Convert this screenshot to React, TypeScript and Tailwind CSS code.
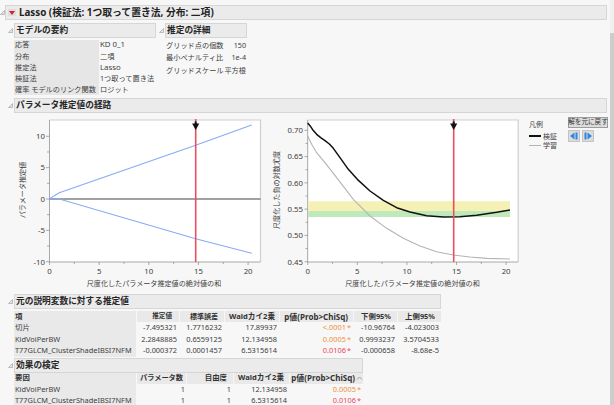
const FONT = '"Noto Sans","Noto Sans CJK JP",sans-serif';

function Tri() {
  return (
    <svg width="5" height="5" viewBox="0 0 5 5" className="shrink-0">
      <path d="M4.5 0.5V4.5H0.5Z" fill="#e4e4e4" stroke="#9a9a9a" strokeWidth="0.6" />
    </svg>
  );
}

function Header({ children, w }: { children: React.ReactNode; w: string }) {
  return (
    <div className="flex items-center ml-[8px]">
      <Tri />
      <div className={`${w} shrink-0 ml-[1px] h-[15px] bg-[#ebebeb] border border-[#d6d6d6] flex items-center pl-[1px] text-[8.7px] font-bold text-[#262626] whitespace-nowrap leading-none`}>
        {children}
      </div>
    </div>
  );
}

const toLeft = (pts: number[][]) => pts.map(([x, y]) => `${x / 3},${110 + y / 3}`).join(" ");
const toRight = (pts: number[][]) => pts.map(([x, y]) => `${270 + x / 3},${110 + y / 3}`).join(" ");

const black = [[113,36],[120,44],[128,56],[140,70],[152,80],[165,89],[178,99],[190,112],[210,140],[235,175],[262,205],[300,240],[340,268],[380,290],[420,303],[470,314],[520,318],[570,317],[620,313],[680,304],[720,297]];
const gray = [[113,75],[125,100],[140,125],[165,155],[200,200],[250,265],[300,315],[350,352],[400,382],[450,405],[500,422],[550,432],[600,438],[650,442],[720,444]];

const txt = "#404040";
const fs = 7.8;

function Marker({ x }: { x: number }) {
  return (
    <g>
      <line x1={x} x2={x} y1={118} y2={261} stroke="#e9505c" strokeWidth={1.6} />
      <path d={`M${x - 3.6} 122.5H${x + 3.6}L${x} 129Z`} fill="#111" />
      <rect x={x - 1} y={120.5} width={2} height={3} fill="#111" />
    </g>
  );
}

function LeftChart() {
  const X = (v: number) => 49.5 + v * 9.93;
  const Y = (v: number) => 198 - v * 6.27;
  return (
    <svg width="256" height="178" viewBox="14 112 256 178" className="shrink-0">
      <rect x={49.5} y={119} width={211} height={142} fill="#fff" />
      <path d="M49.5 119H260.5V261" fill="none" stroke="#d0d0d0" strokeWidth={1.2} />
      <path d="M49.5 119V261H260.5" fill="none" stroke="#a8a8a8" strokeWidth={1} />
      {[0, 2.5, 5, 7.5, 10, 12.5, 15, 17.5, 20].map((v) => (
        <line key={v} x1={X(v)} x2={X(v)} y1={261} y2={v % 5 === 0 ? 264 : 263} stroke="#8a8a8a" strokeWidth={0.7} />
      ))}
      {[-10, -7.5, -5, -2.5, 0, 2.5, 5, 7.5, 10].map((v) => (
        <line key={v} x1={v % 5 === 0 ? 46 : 47} x2={49.5} y1={Y(v)} y2={Y(v)} stroke="#8a8a8a" strokeWidth={0.7} />
      ))}
      <line x1={49.5} x2={260.5} y1={198} y2={198} stroke="#444" strokeWidth={1} />
      <polyline fill="none" stroke="#8aaaf5" strokeWidth={1.1} points={toLeft([[148,264],[163,254],[178,245],[587,103],[755,42]])} />
      <polyline fill="none" stroke="#8aaaf5" strokeWidth={1.1} points={toLeft([[148,264],[178,264],[587,383],[755,427]])} />
      <Marker x={195.7} />
      {[10, 5, 0, -5, -10].map((v) => (
        <text key={v} x={45} y={Y(v) + 2.8} textAnchor="end" fontSize={fs} fill={txt}>{v}</text>
      ))}
      {[0, 5, 10, 15, 20].map((v) => (
        <text key={v} x={X(v)} y={273} textAnchor="middle" fontSize={fs} fill={txt}>{v}</text>
      ))}
      <text x={154} y={284.5} textAnchor="middle" fontSize={7.1} fill={txt}>尺度化したパラメータ推定値の絶対値の和</text>
      <text transform="translate(25 189) rotate(-90)" textAnchor="middle" fontSize={7.1} fill={txt}>パラメータ推定値</text>
    </svg>
  );
}

function RightChart() {
  const X = (v: number) => 307.7 + v * 9.92;
  const Y = (v: number) => 129.3 + (0.7 - v) * 525.6;
  return (
    <svg width="258" height="178" viewBox="270 112 258 178" className="shrink-0">
      <rect x={307.7} y={119} width={210.5} height={142} fill="#fff" />
      <path d="M307.7 119H518.2V261" fill="none" stroke="#d0d0d0" strokeWidth={1.2} />
      <path d="M307.7 119V261H518.2" fill="none" stroke="#a8a8a8" strokeWidth={1} />
      <rect x={308.2} y={200.3} width={201.8} height={9.7} fill="#f5f0b4" />
      <rect x={308.2} y={210} width={201.8} height={6} fill="#bfe9bb" />
      {[0, 2.5, 5, 7.5, 10, 12.5, 15, 17.5, 20].map((v) => (
        <line key={v} x1={X(v)} x2={X(v)} y1={261} y2={v % 5 === 0 ? 264 : 263} stroke="#8a8a8a" strokeWidth={0.7} />
      ))}
      {[0.45, 0.475, 0.5, 0.525, 0.55, 0.575, 0.6, 0.625, 0.65, 0.675, 0.7].map((v, i) => (
        <line key={v} x1={i % 2 === 0 ? 304.5 : 305.5} x2={307.7} y1={Y(v)} y2={Y(v)} stroke="#8a8a8a" strokeWidth={0.7} />
      ))}
      <polyline fill="none" stroke="#b4b4b4" strokeWidth={1.1} points={toRight(gray)} />
      <polyline fill="none" stroke="#111" strokeWidth={1.5} strokeLinejoin="round" points={toRight(black)} />
      <Marker x={453.7} />
      {["0.70", "0.65", "0.60", "0.55", "0.50", "0.45"].map((v) => (
        <text key={v} x={303} y={Y(parseFloat(v)) + 2.8} textAnchor="end" fontSize={fs} fill={txt}>{v}</text>
      ))}
      {[0, 5, 10, 15, 20].map((v) => (
        <text key={v} x={X(v)} y={273} textAnchor="middle" fontSize={fs} fill={txt}>{v}</text>
      ))}
      <text x={412.5} y={284.5} textAnchor="middle" fontSize={7.1} fill={txt}>尺度化したパラメータ推定値の絶対値の和</text>
      <text transform="translate(279 189) rotate(-90)" textAnchor="middle" fontSize={7.1} fill={txt}>尺度化した負の対数尤度</text>
    </svg>
  );
}

function StepBtn({ dir }: { dir: "l" | "r" }) {
  return (
    <div className="w-[12px] h-[12px] bg-[#dcdcdc] border border-[#c4c4c4] flex items-center justify-center">
      <svg width="8" height="8" viewBox="0 0 8 8">
        {dir === "l" ? (
          <path d="M0 4L4.5 0.5V7.5ZM5.5 0.5H7.5V7.5H5.5Z" fill="#2f86e6" />
        ) : (
          <path d="M8 4L3.5 0.5V7.5ZM0.5 0.5H2.5V7.5H0.5Z" fill="#2f86e6" />
        )}
      </svg>
    </div>
  );
}

function Legend() {
  return (
    <div className="flex shrink-0 w-[80px] h-[178px]">
      <div className="w-[40px] ml-[1px] pt-[7.5px] text-[7px] text-[#404040] leading-none whitespace-nowrap">
        <div>凡例</div>
        <div className="flex items-center mt-[5px] gap-[2px]">
          <div className="w-[12px] h-[1.5px] bg-[#111]" />
          <span>検証</span>
        </div>
        <div className="flex items-center mt-[2.5px] gap-[2px]">
          <div className="w-[12px] h-[1px] bg-[#b4b4b4]" />
          <span>学習</span>
        </div>
      </div>
      <div className="pt-[4px]">
        <div className="w-[40px] h-[10.5px] bg-[#dcdcdc] border border-[#9c9c9c] flex items-center justify-center text-[6.6px] text-[#333] leading-none whitespace-nowrap">解を元に戻す</div>
        <div className="flex gap-[1.5px] mt-[2.5px]">
          <StepBtn dir="l" />
          <StepBtn dir="r" />
        </div>
      </div>
    </div>
  );
}

const cellR = "flex items-center justify-end pr-[2px] h-[11.5px] whitespace-nowrap";
const headBase = "flex items-center justify-end h-[11px] bg-[#e9e9e9] border-l border-[#f7f7f7] font-bold text-[#333] whitespace-nowrap";
const keyC = "flex items-center pl-[1px] h-[11.5px] bg-[#e9e9e9] whitespace-nowrap";

function PVal({ v, c }: { v: string; c: string }) {
  return (
    <div className={`${cellR} ${c}`}>
      {v}
      <span className="ml-[1px]">*</span>
    </div>
  );
}

export default function App() {
  return (
    <div className="w-[614px] h-[405px] overflow-hidden bg-[#f7f7f7] flex" style={{ fontFamily: FONT }}>
      <div className="w-[610px] shrink-0 pt-[5px]">
        {/* Title */}
        <div className="flex items-center">
          <Tri />
          <div className="w-[602px] h-[15px] shrink-0 bg-[#ebebeb] border border-[#d6d6d6] flex items-center whitespace-nowrap leading-none">
            <div className="w-[8px] h-[7px] ml-[2px] bg-[#dedede] flex items-center justify-center">
              <svg width="6" height="4" viewBox="0 0 6 4"><path d="M0 0H6L3 4Z" fill="#d8202c" /></svg>
            </div>
            <span className="ml-[3px] text-[9.8px] font-bold text-[#222]">Lasso (検証法: 1つ取って置き法, 分布: 二項)</span>
          </div>
        </div>

        {/* Summary + Details */}
        <div className="flex mt-[3px] h-[73px]">
          <div className="w-[151px] shrink-0">
            <Header w="w-[142px]">モデルの要約</Header>
            <div className="ml-[14px] mt-[1.5px] w-[142px] grid grid-cols-[85px_57px] text-[7.2px] text-[#404040] leading-none">
              {[["応答", "KD 0_1", "text-[7.8px]"], ["分布", "二項", ""], ["推定法", "Lasso", "text-[7.8px]"], ["検証法", "1つ取って置き法", ""], ["確率 モデルのリンク関数", "ロジット", ""]].map(([k, v, c]) => (
                <div key={k} className="contents">
                  <div className="h-[11.2px] bg-[#e6e6e6] pl-[1px] flex items-center whitespace-nowrap">{k}</div>
                  <div className={`h-[11.2px] pl-[1px] flex items-center whitespace-nowrap ${c}`}>{v}</div>
                </div>
              ))}
            </div>
          </div>
          <div className="w-[100px]">
            <Header w="w-[82px]">推定の詳細</Header>
            <div className="ml-[15px] mt-[1px] grid grid-cols-[56px_24px] text-[7.2px] text-[#404040] leading-none w-[80px]">
              {[["グリッド点の個数", "150"], ["最小ペナルティ比", "1e-4"], ["グリッドスケール", "平方根"]].map(([k, v]) => (
                <div key={k} className="contents">
                  <div className="h-[12.5px] flex items-center whitespace-nowrap">{k}</div>
                  <div className="h-[12.5px] flex items-center justify-end whitespace-nowrap">{v}</div>
                </div>
              ))}
            </div>
          </div>
        </div>

        {/* Path */}
        <div className="mt-[2px]">
          <Header w="w-[593px]">パラメータ推定値の経路</Header>
        </div>
        <div className="flex ml-[14px] h-[178px]">
          <LeftChart />
          <RightChart />
          <Legend />
        </div>

        {/* Estimates */}
        <div className="mt-[3px]">
          <Header w="w-[427px]">元の説明変数に対する推定値</Header>
        </div>
        <div className="ml-[14px] mt-[2px] w-[427px] grid grid-cols-[122px_43px_45px_55px_74px_44px_44px] text-[7.4px] text-[#404040] leading-none">
          <div className="flex items-center pl-[1px] h-[11px] bg-[#e9e9e9] font-bold text-[#333]">項</div>
          <div className={`${headBase} pr-[7px] text-[6.6px]`}>推定値</div>
          <div className={`${headBase} pr-[6px] text-[7px]`}>標準誤差</div>
          <div className={`${headBase} pr-[4px] text-[7.6px]`}>Waldカイ2乗</div>
          <div className={`${headBase} pr-[5px] text-[8px]`}>p値(Prob&gt;ChiSq)</div>
          <div className={`${headBase} pr-[6px] text-[7.4px]`}>下側95%</div>
          <div className={`${headBase} pr-[6px] text-[7.4px]`}>上側95%</div>

          <div className={keyC}>切片</div>
          <div className={cellR}>-7.495321</div>
          <div className={cellR}>1.7716232</div>
          <div className={cellR}>17.89937</div>
          <PVal v="<.0001" c="text-[#ee9040]" />
          <div className={cellR}>-10.96764</div>
          <div className={cellR}>-4.023003</div>

          <div className={keyC}>KidVoiPerBW</div>
          <div className={cellR}>2.2848885</div>
          <div className={cellR}>0.6559125</div>
          <div className={cellR}>12.134958</div>
          <PVal v="0.0005" c="text-[#ee9040]" />
          <div className={cellR}>0.9993237</div>
          <div className={cellR}>3.5704533</div>

          <div className={keyC}>T77GLCM_ClusterShadeIBSI7NFM</div>
          <div className={cellR}>-0.000372</div>
          <div className={cellR}>0.0001457</div>
          <div className={cellR}>6.5315614</div>
          <PVal v="0.0106" c="text-[#ee4560]" />
          <div className={cellR}>-0.000658</div>
          <div className={cellR}>-8.68e-5</div>
        </div>

        {/* Effects */}
        <div className="mt-[1px]">
          <Header w="w-[349px]">効果の検定</Header>
        </div>
        <div className="ml-[14px] w-[349px] grid grid-cols-[122px_50px_47px_56px_74px] text-[7.4px] text-[#404040] leading-none">
          <div className="flex items-center pl-[1px] h-[11px] bg-[#e9e9e9] font-bold text-[#333]">要因</div>
          <div className={`${headBase} pr-[3px] text-[7.2px]`}>パラメータ数</div>
          <div className={`${headBase} pr-[6px] text-[7.4px]`}>自由度</div>
          <div className={`${headBase} pr-[5px] text-[7.6px]`}>Waldカイ2乗</div>
          <div className={`${headBase} text-[8px]`}>
            p値(Prob&gt;ChiSq)
            <svg width="7" height="4" viewBox="0 0 7 4" className="ml-[1px]"><path d="M1 3.5L3.5 1L6 3.5" fill="none" stroke="#8a8a8a" strokeWidth="0.8" /></svg>
          </div>

          <div className={keyC}>KidVoiPerBW</div>
          <div className={`${cellR} !pr-[1px]`}>1</div>
          <div className={cellR}>1</div>
          <div className={cellR}>12.134958</div>
          <PVal v="0.0005" c="text-[#ee9040]" />

          <div className={keyC}>T77GLCM_ClusterShadeIBSI7NFM</div>
          <div className={`${cellR} !pr-[1px]`}>1</div>
          <div className={cellR}>1</div>
          <div className={cellR}>6.5315614</div>
          <PVal v="0.0106" c="text-[#ee4560]" />
        </div>
      </div>

      {/* Scrollbar */}
      <div className="w-[4px] h-full bg-[#f0f0f0] flex flex-col">
        <div className="h-[33px]" />
        <div className="flex-1 bg-[#cdcdcd]" />
      </div>
    </div>
  );
}
